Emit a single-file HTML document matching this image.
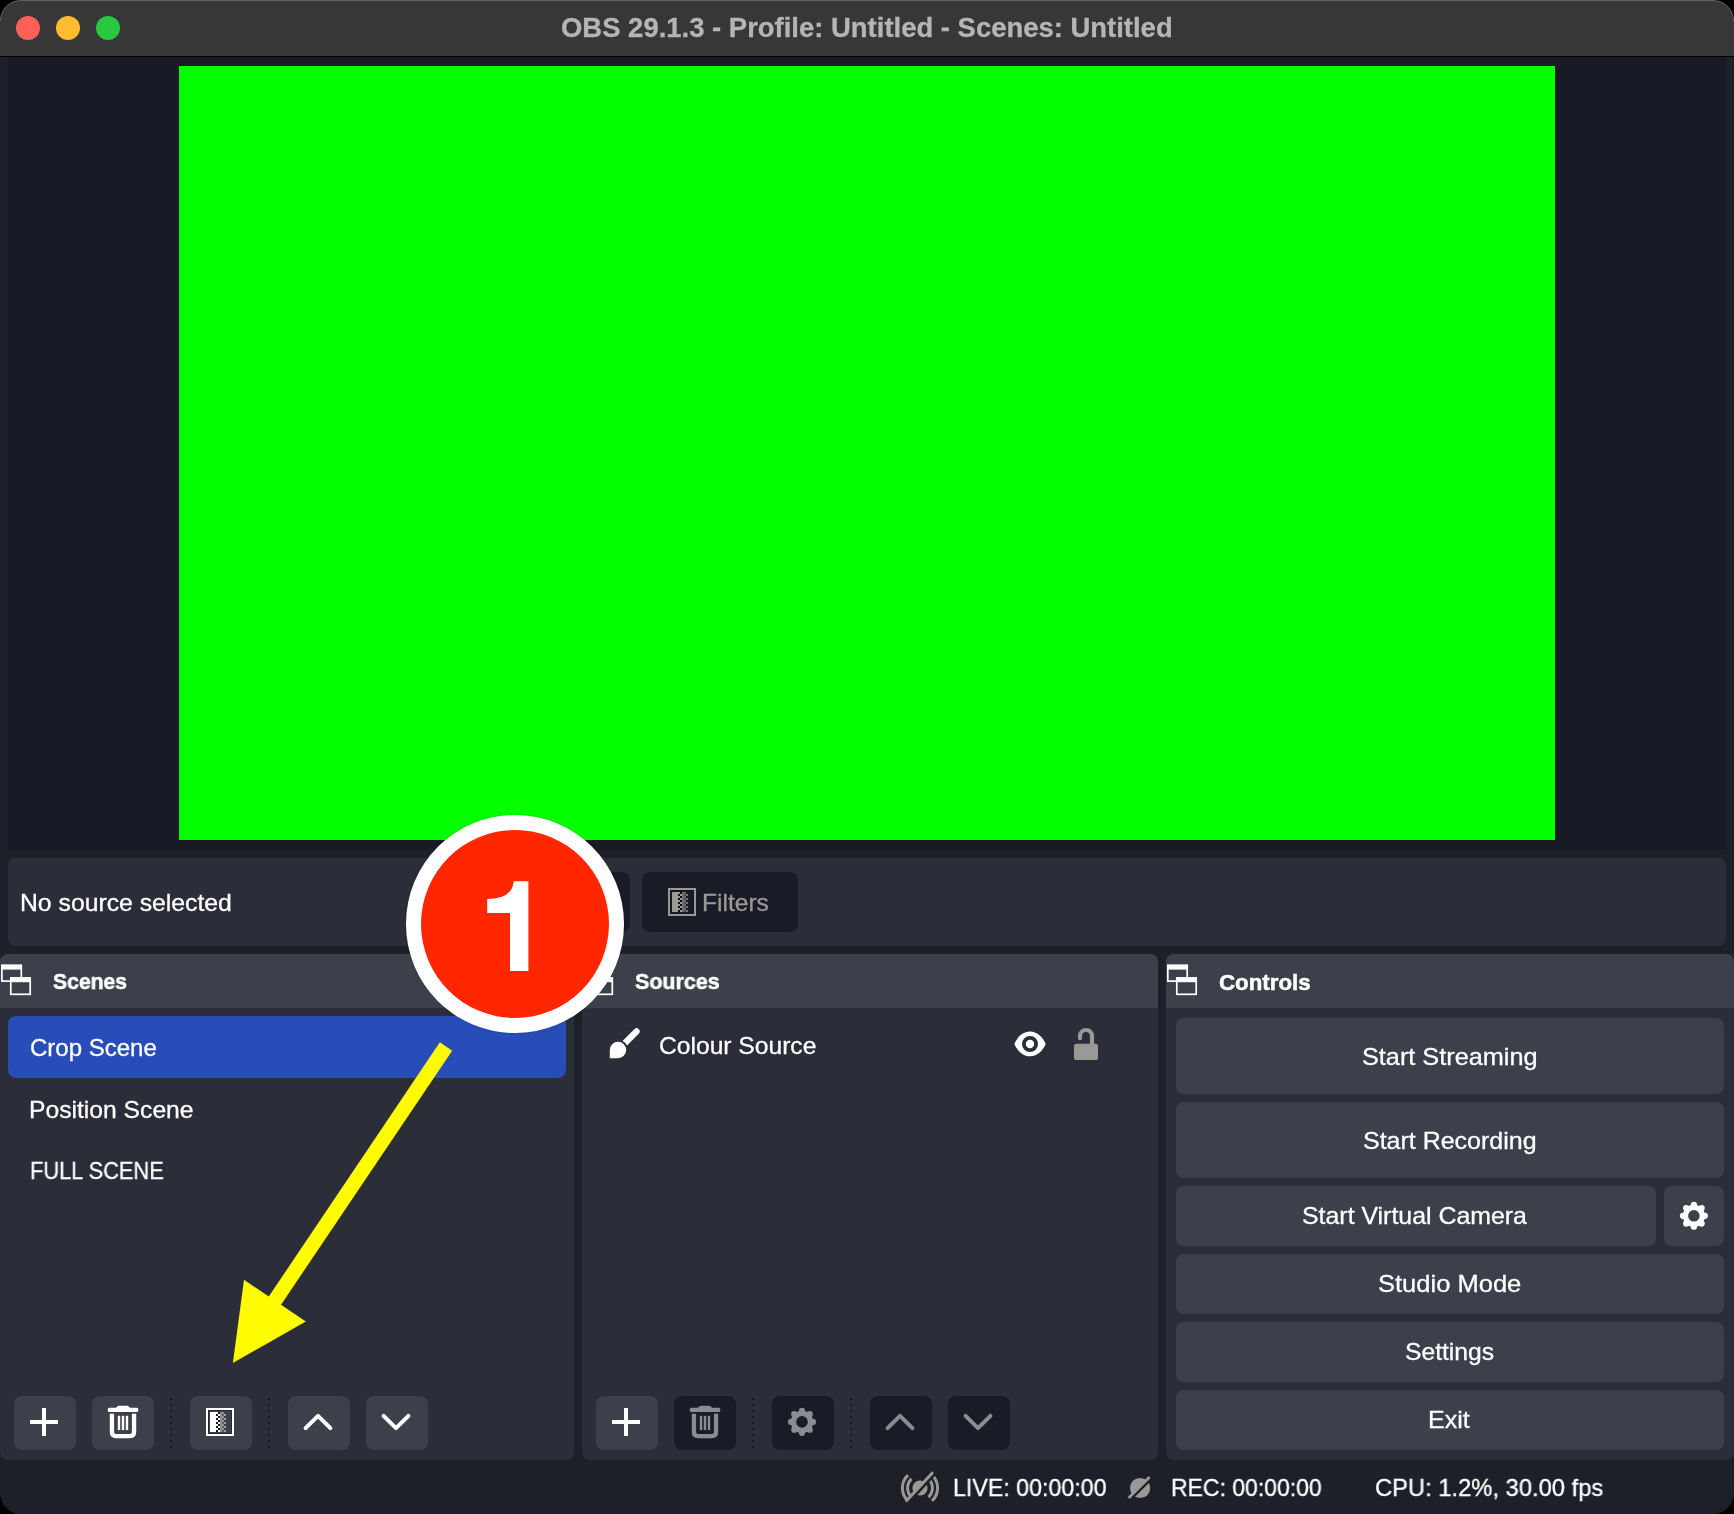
<!DOCTYPE html>
<html lang="en">
<head>
<meta charset="utf-8">
<title>OBS 29.1.3 - Profile: Untitled - Scenes: Untitled</title>
<style>
*{box-sizing:border-box;margin:0;padding:0}
html,body{width:1734px;height:1514px;overflow:hidden;background:#000}
body{font-family:"Liberation Sans",sans-serif;color:#fff;position:relative}
.abs,.win *{position:absolute}
.win{position:absolute;left:0;top:0;width:1734px;height:1514px;border-radius:21px;overflow:hidden;background:#1e2029}
.titlebar{left:0;top:0;width:1734px;height:57px;background:#373737;border-bottom:1px solid #000}
.rimclip{left:0;top:0;width:1734px;height:21px;overflow:hidden}
.rim{left:0;top:0;width:1734px;height:80px;border-radius:21px;border:1px solid #626262}
.tl{width:24px;height:24px;border-radius:50%;top:16px}
.title{font-weight:bold;color:#b5b5b5;-webkit-text-stroke:0}
.preview{left:8px;top:57px;width:1718px;height:793px;background:#181a25}
.green{left:179px;top:66px;width:1376px;height:774px;background:#03ff00}
.toolbar{left:8px;top:858px;width:1718px;height:88px;background:#2b2e38;border-radius:8px}
.t{white-space:nowrap;line-height:1;transform-origin:0 0;will-change:transform;-webkit-text-stroke:.3px}
.b{font-weight:bold;-webkit-text-stroke:.5px}
.btn{background:#3c404b;border-radius:8px}
.btn.dark{background:#191b26}
.dock{top:954px;height:506px;background:#2b2e38;border-radius:8px;overflow:hidden}
.dock .hdr{left:0;top:0;width:100%;height:54px;background:#3c404b}
.sep{width:2px;height:50px;top:1398px;background:repeating-linear-gradient(to bottom,#16171f 0,#16171f 2px,transparent 2px,transparent 6px)}
.cbtn{left:1176px;width:548px;height:60px;background:#3c404b;border-radius:8px}
svg{overflow:visible}
</style>
</head>
<body>
<div class="win">
  <!-- title bar -->
  <div class="titlebar"></div>
  <div class="rimclip"><div class="rim"></div></div>
  <div class="tl" style="left:16px;background:#fe5f57"></div>
  <div class="tl" style="left:56px;background:#febc2e"></div>
  <div class="tl" style="left:96px;background:#28c840"></div>
  <div class="t title" id="title" style="left:561.0px;top:14.7px;font-size:27px;transform:scaleX(1.0167)">OBS 29.1.3 - Profile: Untitled - Scenes: Untitled</div>

  <!-- preview -->
  <div class="preview"></div>
  <div class="green"></div>

  <!-- source toolbar -->
  <div class="toolbar"></div>
  <div class="t" id="nosrc" style="left:20.1px;top:890.7px;font-size:24px;transform:scaleX(1.0313)">No source selected</div>
  <div class="btn dark" style="left:440px;top:872px;width:190px;height:60px"></div>
  <div class="t" id="props" style="left:498px;top:890.7px;font-size:24px;color:#9a9996">Properties</div>
  <div class="btn dark" style="left:642px;top:872px;width:156px;height:60px"></div>
  <div class="t" id="filters" style="left:702.4px;top:890.7px;font-size:24px;color:#9a9996;transform:scaleX(1.0237)">Filters</div>

  <!-- docks -->
  <div class="dock" id="dscenes" style="left:0;width:574px"><div class="hdr"></div></div>
  <div class="dock" id="dsources" style="left:582px;width:576px"><div class="hdr"></div></div>
  <div class="dock" id="dcontrols" style="left:1166px;width:568px"><div class="hdr"></div></div>

  <div class="t b" id="hscenes" style="left:52.9px;top:971.4px;font-size:22px;transform:scaleX(0.9600)">Scenes</div>
  <div class="t b" id="hsources" style="left:635.1px;top:971.4px;font-size:22px;transform:scaleX(0.9760)">Sources</div>
  <div class="t b" id="hcontrols" style="left:1218.7px;top:971.7px;font-size:22px;transform:scaleX(1.0130)">Controls</div>

  <!-- scenes list -->
  <div style="left:8px;top:1016px;width:558px;height:62px;background:#284cb8;border-radius:8px"></div>
  <div class="t" id="s1" style="left:30.4px;top:1035.7px;font-size:24px;transform:scaleX(1.0000)">Crop Scene</div>
  <div class="t" id="s2" style="left:28.8px;top:1097.7px;font-size:24px;transform:scaleX(1.0278)">Position Scene</div>
  <div class="t" id="s3" style="left:30.2px;top:1159.3px;font-size:24px;transform:scaleX(0.9087)">FULL SCENE</div>

  <!-- sources list -->
  <div class="t" id="src1" style="left:659.1px;top:1033.5px;font-size:24px;transform:scaleX(1.0257)">Colour Source</div>

  <!-- scenes toolbar -->
  <div class="btn" style="left:14px;top:1396px;width:62px;height:54px"></div>
  <div class="btn" style="left:92px;top:1396px;width:62px;height:54px"></div>
  <div class="sep" style="left:170px"></div>
  <div class="btn" style="left:190px;top:1396px;width:62px;height:54px"></div>
  <div class="sep" style="left:268px"></div>
  <div class="btn" style="left:288px;top:1396px;width:62px;height:54px"></div>
  <div class="btn" style="left:366px;top:1396px;width:62px;height:54px"></div>

  <!-- sources toolbar -->
  <div class="btn" style="left:596px;top:1396px;width:62px;height:54px"></div>
  <div class="btn dark" style="left:674px;top:1396px;width:62px;height:54px"></div>
  <div class="sep" style="left:752px"></div>
  <div class="btn dark" style="left:772px;top:1396px;width:62px;height:54px"></div>
  <div class="sep" style="left:850px"></div>
  <div class="btn dark" style="left:870px;top:1396px;width:62px;height:54px"></div>
  <div class="btn dark" style="left:948px;top:1396px;width:62px;height:54px"></div>

  <!-- controls -->
  <div class="cbtn" style="top:1018px;height:76px"></div>
  <div class="cbtn" style="top:1102px;height:76px"></div>
  <div class="cbtn" style="top:1186px;width:480px"></div>
  <div class="cbtn" style="top:1186px;left:1664px;width:60px"></div>
  <div class="cbtn" style="top:1254px"></div>
  <div class="cbtn" style="top:1322px"></div>
  <div class="cbtn" style="top:1390px"></div>
  <div class="t" id="c1" style="left:1362.3px;top:1044.7px;font-size:24px;transform:scaleX(1.0526)">Start Streaming</div>
  <div class="t" id="c2" style="left:1363.3px;top:1128.8px;font-size:24px;transform:scaleX(1.0407)">Start Recording</div>
  <div class="t" id="c3" style="left:1302.3px;top:1204.4px;font-size:24px;transform:scaleX(1.0366)">Start Virtual Camera</div>
  <div class="t" id="c4" style="left:1378.0px;top:1272.3px;font-size:24px;transform:scaleX(1.0633)">Studio Mode</div>
  <div class="t" id="c5" style="left:1405.0px;top:1340.3px;font-size:24px;transform:scaleX(1.0276)">Settings</div>
  <div class="t" id="c6" style="left:1428.4px;top:1408.4px;font-size:24px;transform:scaleX(1.0416)">Exit</div>

  <!-- status bar -->
  <div class="t" id="st1" style="left:952.5px;top:1476.4px;font-size:24px;transform:scaleX(0.9670)">LIVE: 00:00:00</div>
  <div class="t" id="st2" style="left:1171.1px;top:1476.4px;font-size:24px;transform:scaleX(0.9574)">REC: 00:00:00</div>
  <div class="t" id="st3" style="left:1375.1px;top:1476.4px;font-size:24px;transform:scaleX(0.9890)">CPU: 1.2%, 30.00 fps</div>

  <!-- ICONS-BEGIN -->
  <svg style="left:0;top:0" width="1734" height="1514" viewBox="0 0 1734 1514">
  <rect x="1.9" y="965.5" width="19.4" height="15.6" fill="none" stroke="#fff" stroke-width="1.7"/><rect x="1.0" y="964.6" width="21" height="5" fill="#fff"/><rect x="10.8" y="978.1" width="19.4" height="16.2" fill="#3c404b" stroke="#fff" stroke-width="1.7"/><rect x="10.0" y="977.2" width="21" height="5" fill="#fff"/>
  <rect x="583.9" y="965.5" width="19.4" height="15.6" fill="none" stroke="#fff" stroke-width="1.7"/><rect x="583.0" y="964.6" width="21" height="5" fill="#fff"/><rect x="592.9" y="978.1" width="19.4" height="16.2" fill="#3c404b" stroke="#fff" stroke-width="1.7"/><rect x="592.0" y="977.2" width="21" height="5" fill="#fff"/>
  <rect x="1167.8" y="965.5" width="19.4" height="15.6" fill="none" stroke="#fff" stroke-width="1.7"/><rect x="1167.0" y="964.6" width="21" height="5" fill="#fff"/><rect x="1176.8" y="978.1" width="19.4" height="16.2" fill="#3c404b" stroke="#fff" stroke-width="1.7"/><rect x="1176.0" y="977.2" width="21" height="5" fill="#fff"/>
  <rect x="669" y="889" width="26" height="26" fill="none" stroke="#9a9996" stroke-width="2"/><rect x="670.5" y="890.5" width="23" height="23" fill="none" stroke="#0e0f16" stroke-width="1" opacity=".55"/><rect x="672" y="892" width="6" height="20" fill="#9a9996"/><rect x="678" y="892" width="2" height="2" fill="#9a9996"/><rect x="680" y="892" width="2" height="2" fill="#0e0f16"/><rect x="682" y="892" width="2" height="2" fill="#6f6f72"/><rect x="684" y="892" width="2" height="2" fill="#6f6f72"/><rect x="678" y="894" width="2" height="2" fill="#0e0f16"/><rect x="680" y="894" width="2" height="2" fill="#9a9996"/><rect x="682" y="894" width="2" height="2" fill="#6f6f72"/><rect x="684" y="894" width="2" height="2" fill="#4b4b50"/><rect x="686" y="894" width="2" height="2" fill="#77777a"/><rect x="678" y="896" width="2" height="2" fill="#9a9996"/><rect x="680" y="896" width="2" height="2" fill="#0e0f16"/><rect x="682" y="896" width="2" height="2" fill="#6f6f72"/><rect x="684" y="896" width="2" height="2" fill="#6f6f72"/><rect x="678" y="898" width="2" height="2" fill="#0e0f16"/><rect x="680" y="898" width="2" height="2" fill="#9a9996"/><rect x="682" y="898" width="2" height="2" fill="#6f6f72"/><rect x="684" y="898" width="2" height="2" fill="#4b4b50"/><rect x="686" y="898" width="2" height="2" fill="#77777a"/><rect x="678" y="900" width="2" height="2" fill="#9a9996"/><rect x="680" y="900" width="2" height="2" fill="#0e0f16"/><rect x="682" y="900" width="2" height="2" fill="#6f6f72"/><rect x="684" y="900" width="2" height="2" fill="#6f6f72"/><rect x="678" y="902" width="2" height="2" fill="#0e0f16"/><rect x="680" y="902" width="2" height="2" fill="#9a9996"/><rect x="682" y="902" width="2" height="2" fill="#6f6f72"/><rect x="684" y="902" width="2" height="2" fill="#4b4b50"/><rect x="686" y="902" width="2" height="2" fill="#77777a"/><rect x="678" y="904" width="2" height="2" fill="#9a9996"/><rect x="680" y="904" width="2" height="2" fill="#0e0f16"/><rect x="682" y="904" width="2" height="2" fill="#6f6f72"/><rect x="684" y="904" width="2" height="2" fill="#6f6f72"/><rect x="678" y="906" width="2" height="2" fill="#0e0f16"/><rect x="680" y="906" width="2" height="2" fill="#9a9996"/><rect x="682" y="906" width="2" height="2" fill="#6f6f72"/><rect x="684" y="906" width="2" height="2" fill="#4b4b50"/><rect x="686" y="906" width="2" height="2" fill="#77777a"/><rect x="678" y="908" width="2" height="2" fill="#9a9996"/><rect x="680" y="908" width="2" height="2" fill="#0e0f16"/><rect x="682" y="908" width="2" height="2" fill="#6f6f72"/><rect x="684" y="908" width="2" height="2" fill="#6f6f72"/><rect x="678" y="910" width="2" height="2" fill="#0e0f16"/><rect x="680" y="910" width="2" height="2" fill="#9a9996"/><rect x="682" y="910" width="2" height="2" fill="#6f6f72"/><rect x="684" y="910" width="2" height="2" fill="#4b4b50"/><rect x="686" y="910" width="2" height="2" fill="#77777a"/>
  <path d="M621 1046.9 L636.5 1031.4" stroke="#fff" stroke-width="6.3" stroke-linecap="round" fill="none"/>
  <circle cx="618" cy="1050" r="10.1" fill="#2b2e38"/>
  <path d="M618 1041.8 a8.2 8.2 0 1 1 0 16.4 h-8.2 v-8.2 a8.2 8.2 0 0 1 8.2 -8.2z" fill="#fff"/>
  <path d="M1014.3 1044 C1017.6 1036.6 1023.2 1031.6 1030 1031.6 C1036.8 1031.6 1042.4 1036.6 1045.7 1044 C1042.4 1051.4 1036.8 1056.3 1030 1056.3 C1023.2 1056.3 1017.6 1051.4 1014.3 1044Z" fill="#fff"/>
  <circle cx="1030" cy="1044" r="6.1" fill="none" stroke="#2b2e38" stroke-width="3.8"/>
  <rect x="1074" y="1043.7" width="24" height="16.4" rx="2.6" fill="#9a9996"/>
  <path d="M1080 1038.2 v-2.2 a6 6 0 0 1 12 0 v9" fill="none" stroke="#9a9996" stroke-width="4.2" stroke-linecap="round"/>
  <path d="M30.0 1422.0h28M44.0 1408.0v28" stroke="#ffffff" stroke-width="4" fill="none"/>
  <rect x="107.80" y="1407.80" width="30.4" height="4.3" rx="1.5" fill="#ffffff"/><path d="M115.60 1408.20 L118.10 1405.80 H127.90 L130.40 1408.20Z" fill="#ffffff"/><path d="M111.95 1413.70 V1432.05 q0 4 4 4 H130.05 q4 0 4 -4 V1413.70" fill="none" stroke="#ffffff" stroke-width="4.3"/><rect x="117.80" y="1415.80" width="2.4" height="14.3" fill="#ffffff"/><rect x="121.80" y="1415.80" width="2.4" height="14.3" fill="#ffffff"/><rect x="125.80" y="1415.80" width="2.4" height="14.3" fill="#ffffff"/>
  <rect x="207" y="1409" width="26" height="26" fill="none" stroke="#ffffff" stroke-width="2"/><rect x="208.5" y="1410.5" width="23" height="23" fill="none" stroke="#15161f" stroke-width="1" opacity=".55"/><rect x="210" y="1412" width="6" height="20" fill="#ffffff"/><rect x="216" y="1412" width="2" height="2" fill="#ffffff"/><rect x="218" y="1412" width="2" height="2" fill="#15161f"/><rect x="220" y="1412" width="2" height="2" fill="#8d8f96"/><rect x="222" y="1412" width="2" height="2" fill="#8d8f96"/><rect x="216" y="1414" width="2" height="2" fill="#15161f"/><rect x="218" y="1414" width="2" height="2" fill="#ffffff"/><rect x="220" y="1414" width="2" height="2" fill="#8d8f96"/><rect x="222" y="1414" width="2" height="2" fill="#5a5d66"/><rect x="224" y="1414" width="2" height="2" fill="#9fa1a7"/><rect x="216" y="1416" width="2" height="2" fill="#ffffff"/><rect x="218" y="1416" width="2" height="2" fill="#15161f"/><rect x="220" y="1416" width="2" height="2" fill="#8d8f96"/><rect x="222" y="1416" width="2" height="2" fill="#8d8f96"/><rect x="216" y="1418" width="2" height="2" fill="#15161f"/><rect x="218" y="1418" width="2" height="2" fill="#ffffff"/><rect x="220" y="1418" width="2" height="2" fill="#8d8f96"/><rect x="222" y="1418" width="2" height="2" fill="#5a5d66"/><rect x="224" y="1418" width="2" height="2" fill="#9fa1a7"/><rect x="216" y="1420" width="2" height="2" fill="#ffffff"/><rect x="218" y="1420" width="2" height="2" fill="#15161f"/><rect x="220" y="1420" width="2" height="2" fill="#8d8f96"/><rect x="222" y="1420" width="2" height="2" fill="#8d8f96"/><rect x="216" y="1422" width="2" height="2" fill="#15161f"/><rect x="218" y="1422" width="2" height="2" fill="#ffffff"/><rect x="220" y="1422" width="2" height="2" fill="#8d8f96"/><rect x="222" y="1422" width="2" height="2" fill="#5a5d66"/><rect x="224" y="1422" width="2" height="2" fill="#9fa1a7"/><rect x="216" y="1424" width="2" height="2" fill="#ffffff"/><rect x="218" y="1424" width="2" height="2" fill="#15161f"/><rect x="220" y="1424" width="2" height="2" fill="#8d8f96"/><rect x="222" y="1424" width="2" height="2" fill="#8d8f96"/><rect x="216" y="1426" width="2" height="2" fill="#15161f"/><rect x="218" y="1426" width="2" height="2" fill="#ffffff"/><rect x="220" y="1426" width="2" height="2" fill="#8d8f96"/><rect x="222" y="1426" width="2" height="2" fill="#5a5d66"/><rect x="224" y="1426" width="2" height="2" fill="#9fa1a7"/><rect x="216" y="1428" width="2" height="2" fill="#ffffff"/><rect x="218" y="1428" width="2" height="2" fill="#15161f"/><rect x="220" y="1428" width="2" height="2" fill="#8d8f96"/><rect x="222" y="1428" width="2" height="2" fill="#8d8f96"/><rect x="216" y="1430" width="2" height="2" fill="#15161f"/><rect x="218" y="1430" width="2" height="2" fill="#ffffff"/><rect x="220" y="1430" width="2" height="2" fill="#8d8f96"/><rect x="222" y="1430" width="2" height="2" fill="#5a5d66"/><rect x="224" y="1430" width="2" height="2" fill="#9fa1a7"/>
  <path d="M305.6 1428.2 l12.4 -12.4 l12.4 12.4" fill="none" stroke="#ffffff" stroke-width="4" stroke-linecap="round" stroke-linejoin="round"/>
  <path d="M383.6 1415.8 l12.4 12.4 l12.4 -12.4" fill="none" stroke="#ffffff" stroke-width="4" stroke-linecap="round" stroke-linejoin="round"/>
  <path d="M612.0 1422.0h28M626.0 1408.0v28" stroke="#ffffff" stroke-width="4" fill="none"/>
  <rect x="689.80" y="1407.80" width="30.4" height="4.3" rx="1.5" fill="#8b8c92"/><path d="M697.60 1408.20 L700.10 1405.80 H709.90 L712.40 1408.20Z" fill="#8b8c92"/><path d="M693.95 1413.70 V1432.05 q0 4 4 4 H712.05 q4 0 4 -4 V1413.70" fill="none" stroke="#8b8c92" stroke-width="4.3"/><rect x="699.80" y="1415.80" width="2.4" height="14.3" fill="#8b8c92"/><rect x="703.80" y="1415.80" width="2.4" height="14.3" fill="#8b8c92"/><rect x="707.80" y="1415.80" width="2.4" height="14.3" fill="#8b8c92"/>
  <path d="M790.90 1421.90 a11.10 11.10 0 1 0 22.20 0 a11.10 11.10 0 1 0 -22.20 0Z M796.20 1421.90 a5.80 5.80 0 1 0 11.60 0 a5.80 5.80 0 1 0 -11.60 0Z" fill="#8b8c92" fill-rule="evenodd"/><circle cx="812.95" cy="1421.90" r="3.10" fill="#8b8c92"/><circle cx="809.74" cy="1429.64" r="3.10" fill="#8b8c92"/><circle cx="802.00" cy="1432.85" r="3.10" fill="#8b8c92"/><circle cx="794.26" cy="1429.64" r="3.10" fill="#8b8c92"/><circle cx="791.05" cy="1421.90" r="3.10" fill="#8b8c92"/><circle cx="794.26" cy="1414.16" r="3.10" fill="#8b8c92"/><circle cx="802.00" cy="1410.95" r="3.10" fill="#8b8c92"/><circle cx="809.74" cy="1414.16" r="3.10" fill="#8b8c92"/>
  <path d="M887.6 1428.2 l12.4 -12.4 l12.4 12.4" fill="none" stroke="#8b8c92" stroke-width="4" stroke-linecap="round" stroke-linejoin="round"/>
  <path d="M965.6 1415.8 l12.4 12.4 l12.4 -12.4" fill="none" stroke="#8b8c92" stroke-width="4" stroke-linecap="round" stroke-linejoin="round"/>
  <path d="M1682.80 1215.80 a11.10 11.10 0 1 0 22.20 0 a11.10 11.10 0 1 0 -22.20 0Z M1688.10 1215.80 a5.80 5.80 0 1 0 11.60 0 a5.80 5.80 0 1 0 -11.60 0Z" fill="#ffffff" fill-rule="evenodd"/><circle cx="1704.85" cy="1215.80" r="3.10" fill="#ffffff"/><circle cx="1701.64" cy="1223.54" r="3.10" fill="#ffffff"/><circle cx="1693.90" cy="1226.75" r="3.10" fill="#ffffff"/><circle cx="1686.16" cy="1223.54" r="3.10" fill="#ffffff"/><circle cx="1682.95" cy="1215.80" r="3.10" fill="#ffffff"/><circle cx="1686.16" cy="1208.06" r="3.10" fill="#ffffff"/><circle cx="1693.90" cy="1204.85" r="3.10" fill="#ffffff"/><circle cx="1701.64" cy="1208.06" r="3.10" fill="#ffffff"/>
  <circle cx="920" cy="1488" r="7.6" fill="#9a9996"/>
  <path d="M911.54 1497.07 A12.40 12.40 0 0 1 911.54 1478.93" fill="none" stroke="#9a9996" stroke-width="3"/>
  <path d="M908.00 1500.87 A17.60 17.60 0 0 1 908.00 1475.13" fill="none" stroke="#9a9996" stroke-width="3"/>
  <path d="M928.46 1478.93 A12.40 12.40 0 0 1 928.46 1497.07" fill="none" stroke="#9a9996" stroke-width="3"/>
  <path d="M932.00 1475.13 A17.60 17.60 0 0 1 932.00 1500.87" fill="none" stroke="#9a9996" stroke-width="3"/>
  <path d="M907.8 1503.2 L935 1473.8" stroke="#1e2029" stroke-width="3" fill="none"/>
  <path d="M905.8 1501.6 L933 1472.2" stroke="#9a9996" stroke-width="3" fill="none"/>
  <circle cx="1140.1" cy="1488" r="10.1" fill="#9a9996"/>
  <path d="M1130.3 1499.6 L1151.3 1478.6" stroke="#1e2029" stroke-width="2.8" fill="none"/>
  <path d="M1128.6 1497.9 L1149.6 1476.9" stroke="#9a9996" stroke-width="2.8" fill="none"/>
  </svg>
  <!-- ICONS-END -->
  <!-- ANN-BEGIN -->
  <svg style="left:0;top:0" width="1734" height="1514" viewBox="0 0 1734 1514">
    <path d="M446 1046.5 L272.7 1303.9" stroke="#fffb00" stroke-width="14.8" fill="none"/>
    <path d="M232.9 1363 L244 1279.8 L305.8 1321.4Z" fill="#fffb00"/>
  </svg>
  <div id="badge" style="left:405.8px;top:815.4px;width:218.2px;height:217.6px;border-radius:50%;background:#fff;box-shadow:0 0 2px rgba(0,0,0,.25)"></div>
  <div id="badgein" style="left:421px;top:830.4px;width:188px;height:188px;border-radius:50%;background:#ff2600"></div>
  
  <svg style="left:0;top:0" width="1734" height="1514" viewBox="0 0 1734 1514"><path d="M513.7 881.2 H528.4 V970.9 H510 V912.9 H487.2 V899.1 Q512.5 898.5 513.7 881.2Z" fill="#fff"/></svg>
  <div class="t" id="one" style="left:514px;top:930px;font-size:18px;font-weight:bold;color:#fff">1</div>
  <!-- ANN-END -->
</div>
</body>
</html>
